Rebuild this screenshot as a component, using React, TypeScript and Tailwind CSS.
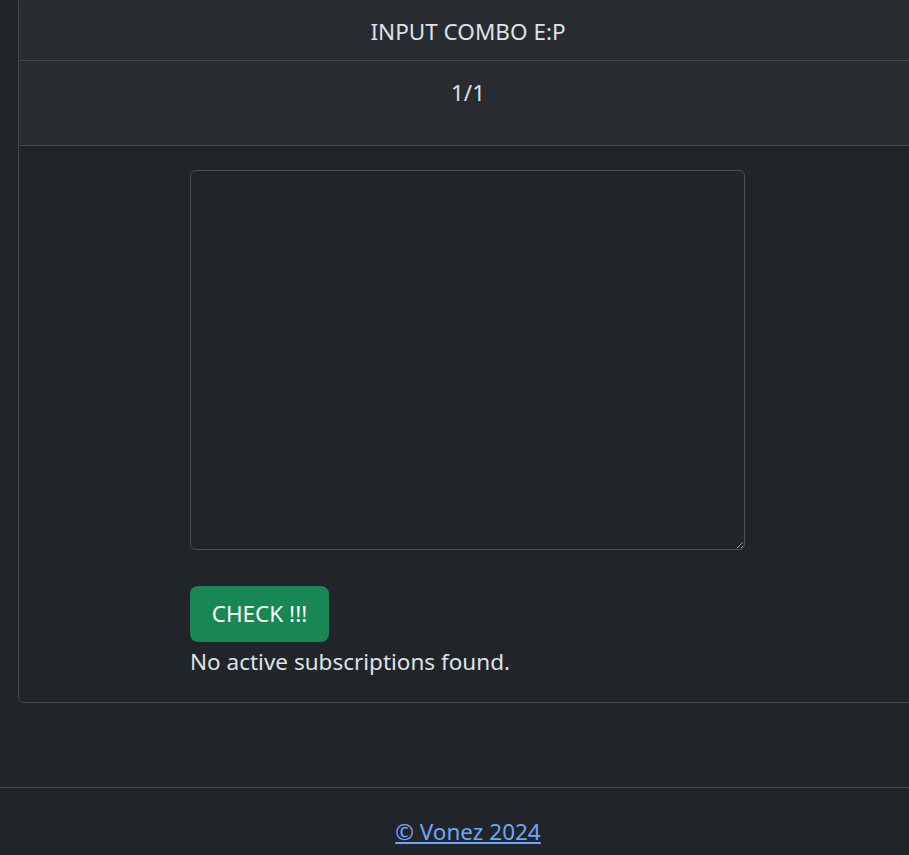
export default function App() {
  return (
    <div
      className="min-h-[855px] w-full overflow-hidden bg-[#212529] text-[#dee2e6]"
      style={{ fontFamily: '"Noto Sans", "Open Sans", sans-serif' }}
    >
      <div className="w-[936px]">
        {/* card */}
        <div className="mx-[18px] -mt-[3px] w-[900px] overflow-hidden rounded-[6px] border border-[#45494d] bg-[#212529]">
          <div className="h-[63px] border-b border-[#45494d] bg-[#282c30] pt-[17px] text-center text-[22.5px] leading-[34px]">
            INPUT COMBO E:P
          </div>
          <div className="h-[85px] border-b border-[#45494d] bg-[#282c30] pt-[15px] text-center text-[22.5px] leading-[34px]">
            1/1
          </div>
          <div className="flex flex-col pb-[23px] pt-[24px]">
            <div className="mx-auto flex w-[556px] flex-col items-start">
              <textarea className="block h-[380px] w-[555px] rounded-[6px] border border-[#495057] bg-[#212529] px-3 py-2 text-[16px] text-[#dee2e6] outline-none" />
              <button className="mt-[36px] h-[56px] w-[139px] rounded-[8px] bg-[#198754] text-[22.5px] leading-[34px] text-white">
                CHECK !!!
              </button>
              <div className="mt-[3px] text-[22.5px] leading-[34px]">No active subscriptions found.</div>
            </div>
          </div>
        </div>
        {/* footer */}
        <footer className="mt-[84px] border-t border-[#45494d] pt-[27px] text-center">
          <a href="#" className="text-[22.5px] leading-[34px] text-[#6ea8fe] underline">
            © Vonez 2024
          </a>
        </footer>
      </div>
    </div>
  );
}
